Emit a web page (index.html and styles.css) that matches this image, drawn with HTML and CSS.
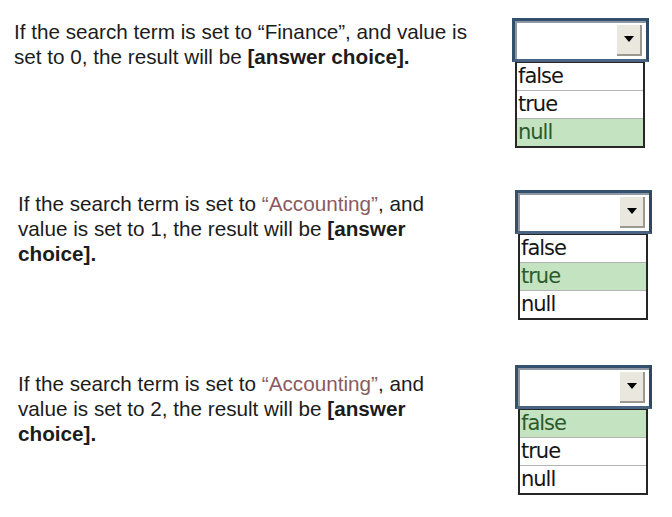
FILE: index.html
```html
<!DOCTYPE html>
<html>
<head>
  <title>Answer choices</title>
  <meta charset="UTF-8">
  <link rel="stylesheet" href="styles.css">
</head>
<body>
  <div class="sheet">

    <div class="question first">
      <p class="prompt">
        If the search term is set to “Finance”, and value is<br>
        set to 0, the result will be <b>[answer choice].</b>
      </p>
      <div class="dropdown">
        <div class="select"><span class="select-btn"><span class="arrow"></span></span></div>
        <ul class="options">
          <li>false</li>
          <li>true</li>
          <li class="picked">null</li>
        </ul>
      </div>
    </div>

    <div class="question second">
      <p class="prompt">
        If the search term is set to <span class="term">“Accounting”</span>, and<br>
        value is set to 1, the result will be <b>[answer<br>
        choice].</b>
      </p>
      <div class="dropdown">
        <div class="select"><span class="select-btn"><span class="arrow"></span></span></div>
        <ul class="options">
          <li>false</li>
          <li class="picked">true</li>
          <li>null</li>
        </ul>
      </div>
    </div>

    <div class="question third">
      <p class="prompt">
        If the search term is set to <span class="term">“Accounting”</span>, and<br>
        value is set to 2, the result will be <b>[answer<br>
        choice].</b>
      </p>
      <div class="dropdown">
        <div class="select"><span class="select-btn"><span class="arrow"></span></span></div>
        <ul class="options">
          <li class="picked">false</li>
          <li>true</li>
          <li>null</li>
        </ul>
      </div>
    </div>

  </div>
</body>
</html>
```

FILE: styles.css
```css
:root {
  --text-color: #1c1c1c;
  --term-color: #8a5a60;
  --select-border: #34506f;
  --list-border: #262626;
  --row-line: #b4b4b4;
  --picked-bg: #c4e3c1;
  --picked-text: #2c5a2c;
}

body {
  margin: 0;
  background-color: #ffffff;
  color: var(--text-color);
  font-family: "Liberation Sans", Arial, sans-serif;
}

.sheet {
  width: 672px;
  height: 517px;
  display: flex;
  flex-direction: column;
}

.question {
  display: flex;
  align-items: flex-start;
}

.first {
  height: 172px;
  padding: 18px 0 0 14px;
}

.second {
  height: 175px;
  padding: 0 0 0 18px;
}

.third {
  padding: 0 0 0 18px;
}

.prompt {
  margin: 0;
  font-size: 20.7px;
  line-height: 25px;
  white-space: nowrap;
}

.first .prompt {
  width: 498px;
  padding-top: 1px;
}

.second .prompt {
  padding-top: 1px;
  width: 497px;
}

.third .prompt {
  padding-top: 6px;
  width: 497px;
}

.prompt b {
  font-weight: bold;
}

.term {
  color: var(--term-color);
}

/* the combo box */
.dropdown {
  width: 137px;
}

.select {
  height: 38px;
  border: 3px solid var(--select-border);
  border-right-color: #2c4868;
  border-bottom-color: #4a6584;
  background-color: #ffffff;
  box-shadow: inset 2px 2px 0 #8e98a4;
  display: flex;
  justify-content: flex-end;
  align-items: center;
  padding-right: 4px;
}

.select-btn {
  width: 25px;
  height: 31px;
  background-color: #e9e7de;
  border-right: 2px solid #9a9890;
  border-bottom: 2px solid #9a9890;
  box-sizing: border-box;
  display: flex;
  justify-content: center;
  align-items: center;
}

.arrow {
  width: 0;
  height: 0;
  border-left: 5px solid transparent;
  border-right: 5px solid transparent;
  border-top: 6px solid #000000;
}

.options {
  list-style: none;
  margin: 0 4px 0 3px;
  padding: 0;
  border: 2px solid var(--list-border);
  border-top-width: 1px;
  font-family: "DejaVu Sans", Verdana, sans-serif;
  font-size: 21px;
  letter-spacing: -1px;
}

.options li {
  height: 27px;
  line-height: 27px;
  padding-left: 1px;
  border-bottom: 1px solid var(--row-line);
  color: #151515;
}

.options li:last-child {
  border-bottom: none;
}

.options li.picked {
  background-color: var(--picked-bg);
  color: var(--picked-text);
}
```
